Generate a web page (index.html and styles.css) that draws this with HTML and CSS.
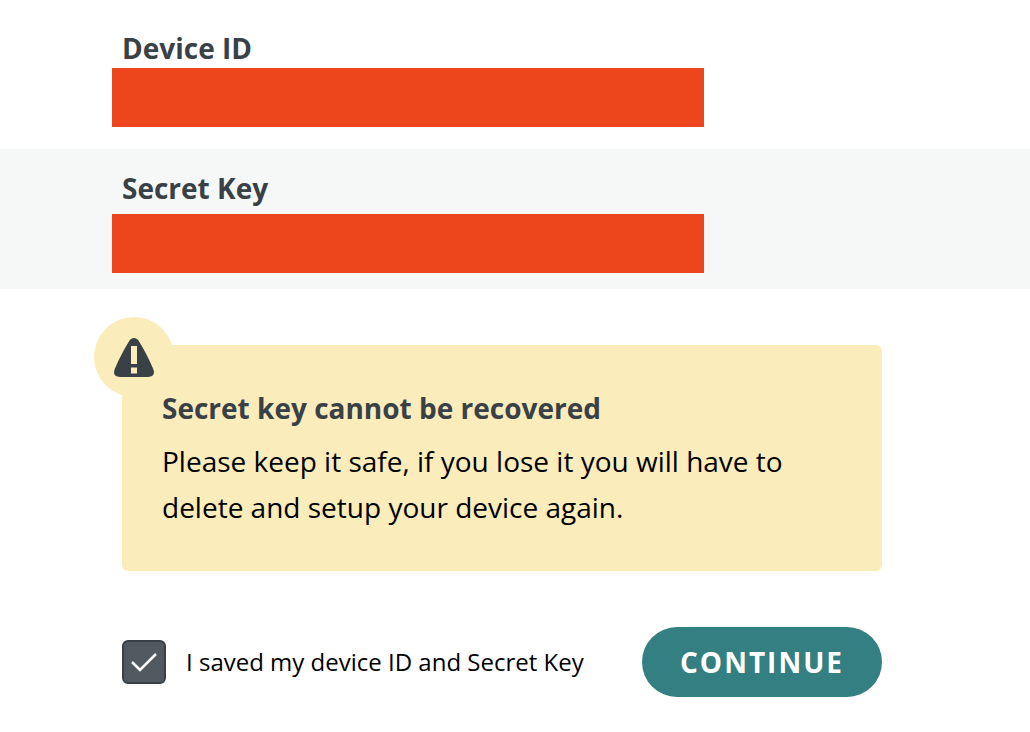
FILE: index.html
```html
<!DOCTYPE html>
<html lang="en">
<head>
<meta charset="utf-8">
<title>Device credentials</title>
<link rel="stylesheet" href="styles.css">
</head>
<body>
<main>
  <dl class="credentials">
    <div class="credential">
      <dt>Device ID</dt>
      <dd class="redacted"></dd>
    </div>
    <div class="credential credential-shaded">
      <dt>Secret Key</dt>
      <dd class="redacted redacted-low"></dd>
    </div>
  </dl>
  <div class="content">
    <section class="notice">
      <span class="notice-badge">
        <svg width="40" height="40" viewBox="0 0 40 40" aria-hidden="true">
          <path fill="#394147" d="M15.500 3.500C17.500 0 22.500 0 24.500 3.500C30 12.500 35 21.500 39 31.500C41.500 37 39 40 34 40H6C1 40-1.500 37 1 31.500C5 21.500 10 12.500 15.500 3.500Z"/>
          <path fill="#fbecbc" d="M17 9h6v18h-6zM17 30.500h6v6h-6z"/>
        </svg>
      </span>
      <h2>Secret key cannot be recovered</h2>
      <p>Please keep it safe, if you lose it you will have to delete and setup your device again.</p>
    </section>
    <form class="actions">
      <label class="confirm">
        <span class="tick">
          <input type="checkbox" checked>
          <svg width="28" height="22" viewBox="0 0 28 22" aria-hidden="true"><path d="M2 11L10 19L26 3" fill="none" stroke="#fff" stroke-width="2.500"/></svg>
        </span>
        I saved my device ID and Secret Key
      </label>
      <button type="button" class="continue">CONTINUE</button>
    </form>
  </div>
</main>
</body>
</html>
```
FILE: styles.css
```css
* {
  box-sizing: border-box;
}

body {
  margin: 0;
  background: #fff;
  color: #000;
  font-family: "Open Sans", "Noto Sans", sans-serif;
}

.credentials,
.credentials dd {
  margin: 0;
}

.credential {
  padding: 28px 122px 22px;
}

.credential dt {
  color: #394147;
  font-size: 28px;
  font-weight: 700;
  line-height: 40px;
}

.credential-shaded {
  padding: 19px 122px 16px;
  background: #f6f8f8;
}

.credentials .redacted {
  width: 80%;
  max-width: 592px;
  height: 59px;
  margin-left: -10px;
  background: #ed451c;
}

.credentials .redacted-low {
  margin-top: 6px;
}

.content {
  max-width: 1004px;
  padding: 56px 122px 32px;
}

.notice {
  position: relative;
  padding: 39px 40px 41px;
  border-radius: 6px;
  background: #fbecbc;
}

.notice-badge {
  position: absolute;
  top: -28px;
  left: -28px;
  display: flex;
  align-items: center;
  justify-content: center;
  width: 80px;
  height: 80px;
  border-radius: 50%;
  background: #fbecbc;
}

.notice h2 {
  margin: 0 0 6px;
  color: #394147;
  font-size: 28px;
  font-weight: 700;
  line-height: 48px;
}

.notice p {
  margin: 0;
  font-size: 28px;
  line-height: 46px;
}

.actions {
  display: flex;
  align-items: center;
  justify-content: space-between;
  margin-top: 56px;
}

.confirm {
  display: flex;
  align-items: center;
  gap: 20px;
  font-size: 24px;
  line-height: 32px;
}

.tick {
  display: grid;
  place-items: center;
}

.tick > * {
  grid-area: 1 / 1;
}

.tick input {
  appearance: none;
  width: 44px;
  height: 44px;
  margin: 0;
  border: 2px solid #394147;
  border-radius: 6px;
  background: #505a60;
}

.tick svg {
  z-index: 1;
  visibility: hidden;
  pointer-events: none;
}

.tick input:checked + svg {
  visibility: visible;
}

.continue {
  height: 70px;
  padding: 0 38px;
  border: 0;
  border-radius: 35px;
  background: #337f82;
  color: #fff;
  font-family: inherit;
  font-size: 28px;
  font-weight: 700;
  letter-spacing: 2px;
}
```
